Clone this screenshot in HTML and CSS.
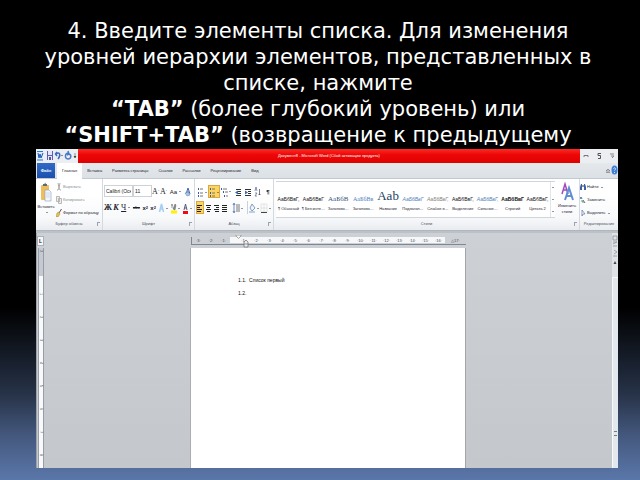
FILE: index.html
```
<!DOCTYPE html>
<html lang="ru">
<head>
<meta charset="utf-8">
<title>Многоуровневый список</title>
<link rel="stylesheet" href="styles.css">
</head>
<body>
<main class="slide">
<h1>4. Введите элементы списка. Для изменения уровней иерархии элементов, представленных в списке, нажмите<br><b>“TAB”</b> (более глубокий уровень) или<br><b>“SHIFT+TAB”</b> (возвращение к предыдущему</h1>

<section class="window" aria-label="Microsoft Word">
<header class="titlebar">
<div class="quick">
<svg viewBox="0 0 42 14" width="42" height="14"><rect x="1" y="2" width="6" height="9" fill="#d6e8fa"/><path d="M1 2.500h6M1 11h6" stroke="#3479c4"/><path d="M2 4l1 5 1-4 1 4 2-5" fill="none" stroke="#1c58ac"/><path d="M11 2h6v9h-6z" fill="#e5e6fa"/><path d="M11.500 2v9M16.500 2v9M12 6.500h4" stroke="#5b5fb8"/><path d="M13 8h2v3h-2z" fill="#545798"/><path d="M21 3l-1.500 2L21 7M20 5c4-3 5 1 2 5" fill="none" stroke="#3d69c2" stroke-width="1.500"/><path d="M25 6h2l-1 1z" fill="#222"/><path d="M33 4c-4-1-5 6-1 6 3 0 4-4 1-5l-2 1M32 2l1 3" fill="none" stroke="#4979c9" stroke-width="1.500"/><path d="M38 5h2M38 7h2l-1 2z" fill="#222" stroke="#333" stroke-width=".5"/></svg>
</div>
<div class="doc-title">Документ8 - Microsoft Word (Сбой активации продукта)</div>
<div class="controls">
<button aria-label="Свернуть"><svg viewBox="0 0 8 8" width="8" height="8"><path d="M2 5V3.500h4V5" fill="none" stroke="#777"/></svg></button>
<button aria-label="Восстановить"><svg viewBox="0 0 8 8" width="8" height="8"><path d="M6 1.500H3v2h2.500v3H3" fill="none" stroke="#555"/></svg></button>
<button aria-label="Закрыть"><svg viewBox="0 0 8 8" width="8" height="8"><path d="M2 2h4M3 4h3L4 6" fill="none" stroke="#888"/></svg></button>
</div>
</header>

<nav class="tabs">
<button class="file">Файл</button>
<button class="tab active">Главная</button>
<button class="tab">Вставка</button>
<button class="tab">Разметка страницы</button>
<button class="tab">Ссылки</button>
<button class="tab">Рассылки</button>
<button class="tab">Рецензирование</button>
<button class="tab">Вид</button>
<svg class="help" viewBox="0 0 14 12" width="14" height="12"><path d="M2 7l2-2 2 2zM2 8.500h4" fill="#ddd" stroke="#777" stroke-width=".7"/><ellipse cx="10.500" cy="6" rx="3" ry="4.500" fill="#3f7fd6"/><path d="M9.500 4.500q1-1.500 2 0 0 1-1 2M10.500 8v1" fill="none" stroke="#fff" stroke-width=".8"/></svg>
</nav>

<div class="ribbon">
<section class="group clipboard">
<div class="body">
<button class="paste"><svg viewBox="0 0 12 20" width="12" height="20"><rect x="1" y="3" width="8" height="15" rx="1" fill="#edbd60"/><path d="M3 4V2h1.500L5 .5 6 2h1v2z" fill="#626a78"/><path d="M5 8h4l2 2v9H5z" fill="#f2f7ff" stroke="#8e9db9" stroke-width=".6"/><path d="M6 11h4M6 13h4M6 15h4" stroke="#b7c8df" stroke-width=".6"/></svg><span>Вставить</span><i class="arrow"></i></button>
<div class="stack">
<button class="off"><svg viewBox="0 0 6 8" width="6" height="8"><path d="M2 0l1 5M4 0L3 5M1 7h1l1-2 1 2h1" fill="none" stroke="#aaa"/></svg>Вырезать</button>
<button class="off"><svg viewBox="0 0 6 8" width="6" height="8"><path d="M.5.5h3v5h-3zM2.500 2.500h3v5h-3z" fill="#eee" stroke="#aaa" stroke-width=".8"/></svg>Копировать</button>
<button><svg viewBox="0 0 6 8" width="6" height="8"><path d="M5.500 0L3 4" stroke="#555"/><path d="M1 4l2-1 1 2-2 3H0z" fill="#e8c14b" stroke="#8d712d" stroke-width=".4"/></svg>Формат по образцу</button>
</div>
</div>
<h2>Буфер обмена<i class="launch"></i></h2>
</section>

<section class="group font">
<div class="body rows">
<div class="row">
<select class="family" aria-label="Шрифт"><option>Calibri (Осн</option></select><select class="size" aria-label="Размер"><option>11</option></select>
<button class="w8 serif">A<sup>ˆ</sup></button><button class="w8 serif">A<sup>ˇ</sup></button><button class="w16 case">Aa<i class="arrow"></i></button>
<button class="w10" aria-label="Очистить формат"><svg viewBox="0 0 8 10" width="8" height="10"><path d="M2 7l2-6 2 6M3 5h2" fill="none" stroke="#4269a7"/><path d="M1 6l3-1 2 3-3 1z" fill="#aac7ea" stroke="#5b7eb3" stroke-width=".5"/></svg></button>
</div>
<div class="row">
<button class="w8 serif strong">Ж</button><button class="w8 serif strong italic">К</button><button class="w12 serif under">Ч<i class="arrow"></i></button><button class="w10 strike">abc</button><button class="w8 index">x<sub>2</sub></button><button class="w8 index">x<sup>2</sup></button>
<button class="w12" aria-label="Эффекты"><svg viewBox="0 0 12 12" width="12" height="12"><path d="M2.500 10l2-8 2 8M3.500 7h2" fill="none" stroke="#a6cdf2" stroke-width="1.500"/><path d="M9 6h2l-1 1z" fill="#333"/></svg></button>
<button class="w12" aria-label="Выделение"><svg viewBox="0 0 12 12" width="12" height="12"><path d="M2 8.500h6v3H2z" fill="#fff200"/><path d="M4 7l2-5 1 1-1 5z" fill="#888" stroke="#666" stroke-width=".5"/><path d="M2 3h2M3 2v4" stroke="#555" stroke-width=".6"/><path d="M9 6h2l-1 1z" fill="#333"/></svg></button>
<button class="w12" aria-label="Цвет текста"><svg viewBox="0 0 12 12" width="12" height="12"><path d="M2 9h5v3H2z" fill="#f20c12"/><path d="M3 8l1.500-6L6 8M3.500 6h2" fill="none" stroke="#555e78"/><path d="M9 6h2l-1 1z" fill="#333"/></svg></button>
</div>
</div>
<h2>Шрифт<i class="launch"></i></h2>
</section>

<section class="group para">
<div class="body rows">
<div class="row">
<button class="w12" aria-label="Маркеры"><svg viewBox="0 0 12 12" width="12" height="12"><path d="M2 2h1v2H2zM2 6h1v2H2zM2 9h1v2H2z" fill="#345ea5"/><path d="M4 3h3M4 7h3M4 10h3" stroke="#777"/><path d="M9 6h2l-1 1z" fill="#333"/></svg></button>
<button class="w12 on" aria-label="Нумерация"><svg viewBox="0 0 12 12" width="12" height="12"><path d="M2 2h1v2H2zM2 6h1v2H2zM2 9h1v2H2z" fill="#345ea5"/><path d="M4 3h3M4 7h3M4 10h3" stroke="#827553"/><path d="M9 6h2l-1 1z" fill="#333"/></svg></button>
<button class="w12" aria-label="Многоуровневый список"><svg viewBox="0 0 12 12" width="12" height="12"><path d="M1 2h1v2H1zM3 5h1v2H3zM4 9h1v2H4z" fill="#345ea5"/><path d="M3 3h4M5 6h3M6 10h2" stroke="#777"/><path d="M9 5h2l-1 1z" fill="#333"/></svg></button>
<button class="w12" aria-label="Уменьшить отступ"><svg viewBox="0 0 8 10" width="8" height="10"><path d="M2 2.500h5M4 4.500h3M4 6.500h3M2 8.500h5" stroke="#333"/><path d="M1 5.500l3-2v4z" fill="#356ab4"/></svg></button>
<button class="w8" aria-label="Увеличить отступ"><svg viewBox="0 0 8 10" width="8" height="10"><path d="M1 2.500h6M4 4.500h3M4 6.500h3M1 8.500h6" stroke="#333"/><path d="M4 5.500l-3-2v4z" fill="#356ab4"/></svg></button>
<button class="w12" aria-label="Сортировка"><svg viewBox="0 0 8 12" width="8" height="12"><path d="M1 5l1-4 1 4M1 7h2L1 10h2" fill="none" stroke="#4f6698" stroke-width=".7"/><path d="M5.500 3v6l-1-1M5.500 9l1-1" fill="none" stroke="#444" stroke-width=".7"/></svg></button>
<button class="w8 index">¶</button>
</div>
<div class="row">
<button class="w8 on" aria-label="По левому краю"><svg viewBox="0 0 8 12" width="8" height="12"><path d="M1 3.500h5M1 5.500h3M1 7.500h5M1 9.500h4" stroke="#222"/></svg></button>
<button class="w8" aria-label="По центру"><svg viewBox="0 0 8 12" width="8" height="12"><path d="M2 3.500h5M3 5.500h3M2 7.500h5M3 9.500h3" stroke="#222"/></svg></button>
<button class="w8" aria-label="По правому краю"><svg viewBox="0 0 8 12" width="8" height="12"><path d="M2 3.500h5M4 5.500h3M2 7.500h5M3 9.500h4" stroke="#222"/></svg></button>
<button class="w8" aria-label="По ширине"><svg viewBox="0 0 8 12" width="8" height="12"><path d="M2 3.500h5M2 5.500h5M2 7.500h5M2 9.500h5" stroke="#222"/></svg></button>
<button class="w20 rule" aria-label="Интервал"><svg viewBox="0 0 12 12" width="12" height="12"><path d="M2 2v8M1 3l1-2 1 2M1 9l1 2 1-2" fill="none" stroke="#315ea7" stroke-width=".7"/><path d="M4 3h4M4 5h4M4 7h4M4 9h4" stroke="#555" stroke-width=".8"/><path d="M9 6h2l-1 1z" fill="#333"/></svg></button>
<button class="w12" aria-label="Заливка"><svg viewBox="0 0 12 12" width="12" height="12"><path d="M1 9h6v2H1z" fill="#b9d1e8"/><path d="M2 6l2-4 3 4-3 3z" fill="#eef5ff" stroke="#5b75a0" stroke-width=".7"/><path d="M9 6h2l-1 1z" fill="#333"/></svg></button>
<button class="w12" aria-label="Границы"><svg viewBox="0 0 12 12" width="12" height="12"><path d="M1 2h6v8H1zM4 2v8M1 6h6" fill="none" stroke="#ccc" stroke-width=".5"/><path d="M1 10.500h6" stroke="#444"/><path d="M9 6h2l-1 1z" fill="#333"/></svg></button>
</div>
</div>
<h2>Абзац<i class="launch"></i></h2>
</section>

<section class="group styles">
<div class="body">
<div class="gallery">
<button><b class="dark">АаБбВвГ,</b>¶ Обычный</button>
<button><b class="dark">АаБбВвГ</b>¶ Без инте…</button>
<button><b class="h1s">АаБбВ</b>Заголово…</button>
<button><b class="h2s">АаБбВв</b>Заголово…</button>
<button><b class="titles">Aab</b>Название</button>
<button><b class="h3s">АаБбВвГ</b>Подзагол…</button>
<button><b class="soft">АаБбВвГ,</b>Слабое в…</button>
<button><b class="dark">АаБбВвГ,</b>Выделение</button>
<button><b class="accent">АаБбВвГ,</b>Сильное…</button>
<button><b class="dark bold">АаБбВвГ</b>Строгий</button>
<button><b class="dark">АаБбВвГ,</b>Цитата 2</button>
<div class="scroller"><i class="arrow up"></i><i class="arrow"></i><i class="arrow"></i></div>
</div>
<button class="change"><svg viewBox="0 0 14 20" width="14" height="20"><path d="M2 12L5 2l3 10M3 8h4" fill="none" stroke="#a24bc0" stroke-width="1.500"/><path d="M5 18L9 6l4 12M6 14h5" fill="none" stroke="#5f8fd2" stroke-width="2"/></svg><span>Изменить<br>стили</span></button>
</div>
<h2>Стили<i class="launch"></i></h2>
</section>

<section class="group edit">
<div class="body stack">
<button><svg viewBox="0 0 6 8" width="6" height="8"><path d="M0 4l1-3h1v6H0zM6 4L5 1H4v6h2z" fill="#3b62a5"/><path d="M2 3h2" stroke="#333"/></svg>Найти<i class="arrow"></i></button>
<button><svg viewBox="0 0 6 8" width="6" height="8"><path d="M0 3l1-2 1 2M3 4l2 3" fill="none" stroke="#456da9"/><path d="M1 5h2v2" fill="none" stroke="#5b9d53"/></svg>Заменить</button>
<button><svg viewBox="0 0 6 8" width="6" height="8"><path d="M2 1v6l1-2h2z" fill="#fff" stroke="#5c76a4" stroke-width=".7"/></svg>Выделить<i class="arrow"></i></button>
</div>
<h2>Редактирование</h2>
</section>
</div>

<div class="workspace">
<aside class="side">
<button class="tabstop">L</button>
<div class="vruler"><div class="vmargin"><span>2</span></div><span>1</span><span>2</span><span>3</span><span>4</span><span>5</span><span>6</span><span>7</span><span>8</span></div>
</aside>
<div class="canvas">
<div class="ruler">
<div class="margin"><span>·3·</span><span>·2·</span><span>·1·</span></div>
<div class="scale"><svg class="indent" viewBox="0 0 14 13" width="14" height="13"><path d="M1 0h5v1L3.500 3.500 1 1z" fill="#f4f4f4" stroke="#888" stroke-width=".7"/><path d="M9 7l2-2 2 2v5H9zM9 9h4" fill="#eee" stroke="#777" stroke-width=".8"/></svg><span>·1·</span><span>·2·</span><span>·3·</span><span>·4·</span><span>·5·</span><span>·6·</span><span>·7·</span><span>·8·</span><span>·9·</span><span>·10·</span><span>·11·</span><span>·12·</span><span>·13·</span><span>·14·</span><span>·15·</span><span>·16·</span></div>
<div class="margin end"><span>△17·</span></div>
</div>
<article class="page"><p>1.1.&nbsp; Список первый</p><p>1.2.</p></article>
</div>
<aside class="scrollbar">
<svg viewBox="0 0 6 32" width="6" height="32"><path d="M1 3h4v4H1zM1 9h4M1 11l4-2M1 13h4M2 17l3 2-3 2M1 23h4" fill="none" stroke="#8b929b" stroke-width=".8"/><path d="M1.500 31l1.500-3 1.500 3z" fill="#444"/></svg>
<div class="thumb"><i></i></div>
</aside>
</div>
</section>
</main>
</body>
</html>
```

FILE: styles.css
```
* { box-sizing: border-box; }
body {
  margin: 0;
  background: #000;
  font-family: "Liberation Sans", sans-serif;
}
.slide {
  display: flex;
  flex-direction: column;
  min-height: 100vh;
  padding: 18px 22px 12px 36px;
  background: linear-gradient(#000 64%, #263247 82%, #45597f 91%, #5a77aa 100%);
}
h1 {
  margin: 0;
  padding-right: 18px;
  font: 400 21px/26px "DejaVu Sans", sans-serif;
  color: #fff;
  text-align: center;
}
h1 b { font-weight: 700; }
button {
  display: flex;
  align-items: center;
  justify-content: center;
  margin: 0;
  padding: 0;
  border: 0;
  background: none;
  color: #1c222c;
  font: inherit;
  white-space: nowrap;
}
svg { display: block; flex: none; }
.window {
  flex: 1;
  display: flex;
  flex-direction: column;
  margin-top: 1px;
  background: #c9cdd2;
  font-size: 4px;
  line-height: 6px;
}
.titlebar { display: flex; height: 14px; background: #eceef1; }
.quick { width: 42px; flex: none; }
.doc-title {
  flex: 1;
  background: linear-gradient(#ff2b22, #ec0808 40%, #e00000);
  color: #fff;
  text-align: center;
  line-height: 14px;
}
.controls { display: flex; align-items: center; justify-content: space-around; width: 38px; }
.tabs {
  display: flex;
  height: 16px;
  padding-left: 1px;
  background: linear-gradient(#e4e8eb, #dce1e6);
  border-bottom: 1px solid #c3c9d0;
}
.tab { padding: 0 5px; }
.file { width: 18px; margin-right: 2px; background: linear-gradient(#2f6bc6, #1c4fae); color: #fff; font-weight: 700; }
.tab.active { background: #fff; height: 16px; }
.help { margin: 1px 0 0 auto; }
.ribbon {
  display: flex;
  height: 52px;
  background: linear-gradient(#fff 30%, #f8f9fb 75%, #e9ecf0);
  border-bottom: 1px solid #b1b6bd;
}
.group { display: flex; flex-direction: column; flex: none; border-right: 1px solid #d5d9df; }
.clipboard { width: 67px; }
.font { width: 92px; }
.para { width: 79px; }
.styles { flex: 1; }
.edit { width: 38px; border: 0; }
.body { flex: 1; display: flex; }
h2 {
  display: flex;
  justify-content: center;
  position: relative;
  margin: 0;
  height: 10px;
  font-size: 4px;
  line-height: 8px;
  font-weight: 400;
  color: #4d5562;
}
.launch {
  position: absolute;
  right: 2px;
  top: 2px;
  width: 3px;
  height: 4px;
  border: 1px solid #9aa2ae;
  border-width: 1px 0 0 1px;
}
.arrow {
  width: 0;
  margin-left: 2px;
  border: 1px solid transparent;
  border-top-color: #333;
  border-bottom: 0;
}
.arrow.up { border-top: 0; border-bottom: 1px solid #333; }
.paste { flex-direction: column; justify-content: flex-start; width: 20px; padding-top: 3px; gap: 2px; }
.stack { display: flex; flex-direction: column; gap: 5px; padding-top: 4px; }
.stack button { justify-content: flex-start; gap: 1px; height: 8px; }
button.off { color: #8a8e94; }
.rows { flex-direction: column; gap: 3px; padding: 6px 1px 0; }
.row { display: flex; height: 13px; }
.w8 { width: 8px; }
.w10 { width: 10px; }
.w12 { width: 12px; }
.w16 { width: 16px; }
.w20 { width: 20px; }
.case { font-size: 6px; }
.serif { font-family: "Liberation Serif", serif; font-size: 8px; }
.strong { font-weight: 700; }
.index { font-weight: 700; font-size: 6px; }
.italic { font-style: italic; }
.under { text-decoration: underline; }
.strike { text-decoration: line-through; font-weight: 700; }
sup, sub { font-size: 4px; line-height: 5px; }
select {
  appearance: none;
  height: 12px;
  margin: 0;
  padding: 0 1px;
  border: 1px solid #cdd2d9;
  border-radius: 0;
  background: #fff;
  color: #222;
  font: 5px "Liberation Sans", sans-serif;
}
.family { width: 29px; }
.size { width: 19px; }
.on { background: #fcd462; border: 1px solid #d9a843; }
.rule { border-right: 1px solid #ccd1d8; }
.gallery {
  flex: 1;
  display: flex;
  height: 37px;
  margin: 2px 0 0 2px;
  border: 1px solid #d0d5db;
  border-width: 1px 0;
  background: #fff;
}
.gallery button { flex: 1 1 0; min-width: 0; flex-direction: column; justify-content: flex-end; gap: 1px; padding-bottom: 5px; overflow: hidden; }
.gallery b { font-weight: 400; font-size: 5px; line-height: 12px; }
.gallery .dark { color: #111; }
.gallery .bold { font-weight: 700; }
.gallery .h1s { font: 7px/12px "Liberation Serif", serif; color: #355481; }
.gallery .h2s { font: 6px/12px "Liberation Serif", serif; color: #4f81bd; }
.gallery .h3s { font-style: italic; color: #4f81bd; }
.gallery .titles { font: 13px/18px "Liberation Serif", serif; color: #243f63; }
.gallery .soft { font-style: italic; color: #808080; }
.gallery .accent { font-style: italic; color: #4f81bd; }
.scroller { width: 5px; display: flex; flex-direction: column; justify-content: space-around; border-left: 1px solid #e1e4e9; }
.scroller .arrow { margin: 0 auto; }
.change { flex-direction: column; justify-content: flex-start; width: 24px; padding-top: 3px; gap: 1px; }
.workspace {
  flex: 1;
  display: flex;
  border-top: 2px solid #bcc1c7;
  background: linear-gradient(#cdd1d6, #c4c8cc);
}
.side { display: flex; flex-direction: column; width: 8px; border-left: 1px solid #9da3aa; }
.tabstop { width: 7px; height: 10px; margin: 3px 0 2px; background: #f5f6f8; border: 1px solid #aab0b8; font-weight: 700; font-size: 5px; }
.vruler { flex: 1; width: 6px; margin-left: 1px; border: 1px solid #969da5; border-width: 0 1px; background: #f8f9fa; }
.vruler span { display: block; height: 23px; padding-top: 17px; color: #555; font-size: 4px; line-height: 4px; writing-mode: vertical-rl; width: 4px; }
.vmargin { height: 28px; background: #c5cad1; }
.vmargin span { padding-top: 2px; height: 8px; }
.canvas { flex: 1; display: flex; flex-direction: column; padding: 4px 146px 0 147px; }
.ruler { display: flex; height: 8px; border-bottom: 1px solid #7f8790; border-left: 1px solid #7f8790; margin-bottom: 3px; font-size: 4px; line-height: 7px; color: #414956; }
.ruler span { flex: 1 1 0; text-align: center; min-width: 0; white-space: nowrap; }
.margin { display: flex; width: 38px; }
.scale { flex: 1; display: flex; position: relative; height: 6px; background: #f6f7f8; padding-left: 7px; }
.indent { position: absolute; left: 5px; top: -2px; }
.end { width: 21px; }
.page {
  flex: 1;
  padding: 26px 47px;
  background: #fff;
  border-right: 1px solid #a2a6ab;
  box-shadow: -1px 0 #a9aeb4;
  color: #111;
  font-size: 5px;
}
.page p { margin: 0; line-height: 13px; }
.scrollbar { display: flex; flex-direction: column; width: 6px; background: #dfe3e8; }
.thumb { flex: 1; display: flex; align-items: center; justify-content: center; margin-top: 12px; border: 1px solid #f6f8fa; border-width: 1px 0 0 1px; background: #e3e7ee; padding-top: 120px; }
.thumb i { width: 3px; height: 5px; border: 1px solid #747b84; border-width: 1px 0; }
```
